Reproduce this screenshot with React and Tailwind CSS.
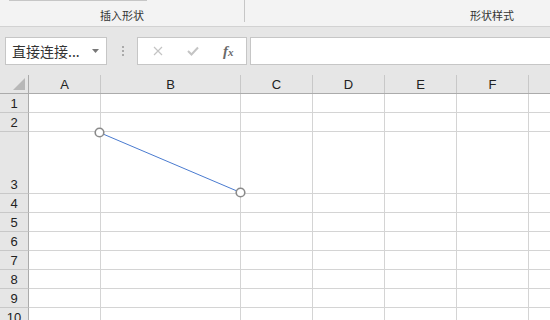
import React from "react";

const cols = [
  { l: "A", w: "w-[72px]" },
  { l: "B", w: "w-[140px]" },
  { l: "C", w: "w-[72px]" },
  { l: "D", w: "w-[72px]" },
  { l: "E", w: "w-[72px]" },
  { l: "F", w: "w-[72px]" },
];

const rows = [
  { n: 1, h: "h-[19px]" },
  { n: 2, h: "h-[19px]" },
  { n: 3, h: "h-[62px]" },
  { n: 4, h: "h-[19px]" },
  { n: 5, h: "h-[19px]" },
  { n: 6, h: "h-[19px]" },
  { n: 7, h: "h-[19px]" },
  { n: 8, h: "h-[19px]" },
  { n: 9, h: "h-[19px]" },
  { n: 10, h: "h-[19px]" },
];

const cjk = { fontFamily: '"Noto Sans CJK SC", "Microsoft YaHei", sans-serif' };
const latin = { fontFamily: '"Liberation Sans", Arial, sans-serif' };

export default function App() {
  return (
    <div className="relative w-[550px] h-[320px] overflow-hidden bg-white">
      {/* Ribbon */}
      <div className="flex h-[27px] bg-[#f3f3f3] border-b border-[#d2d2d2]">
        <div className="relative flex w-[244px] flex-col">
          <div className="ml-[9px] h-px w-[138px] bg-[#c6c6c6]" />
          <div className="flex flex-1 items-center justify-center pt-[3px] text-[11px] text-[#333]" style={cjk}>
            插入形状
          </div>
        </div>
        <div className="mt-0 h-[22px] w-px bg-[#c6c6c6]" />
        <div className="flex flex-1 items-center pl-[225px] pt-[4px] text-[11px] text-[#333]" style={cjk}>
          形状样式
        </div>
      </div>

      {/* Formula bar */}
      <div className="flex h-[48px] items-start bg-[#e6e6e6] pt-[10px]">
        <div className="ml-[5px] flex h-[28px] w-[102px] items-center border border-[#c6c6c6] bg-white pl-[6px]">
          <span className="text-[14px] leading-none text-[#333]" style={cjk}>
            直接连接...
          </span>
          <svg className="ml-auto mr-[7px]" width="7" height="4" viewBox="0 0 7 4">
            <polygon points="0,0 7,0 3.5,4" fill="#777" />
          </svg>
        </div>
        <div className="ml-[15px] mr-[13px] mt-[9px] flex flex-col gap-[2px]">
          <div className="h-[2px] w-[2px] bg-[#aaa]" />
          <div className="h-[2px] w-[2px] bg-[#aaa]" />
          <div className="h-[2px] w-[2px] bg-[#aaa]" />
        </div>
        <div className="flex h-[28px] w-[110px] items-center border border-[#c6c6c6] bg-white">
          <svg className="ml-[15px]" width="10" height="10" viewBox="0 0 10 10">
            <path d="M1 1 L9 9 M9 1 L1 9" stroke="#c4c4c4" strokeWidth="1.2" />
          </svg>
          <svg className="ml-[24px]" width="12" height="10" viewBox="0 0 12 10">
            <path d="M1 5 L4.5 8.5 L11 1.5" stroke="#c4c4c4" strokeWidth="2" fill="none" />
          </svg>
          <span
            className="ml-[24px] text-[15px] font-bold italic leading-none text-[#6a6a6a]"
            style={{ fontFamily: '"Liberation Serif", "Times New Roman", serif' }}
          >
            f<span className="text-[11px]">x</span>
          </span>
        </div>
        <div className="ml-[3px] h-[28px] flex-1 border-y border-l border-[#c6c6c6] bg-white" />
      </div>

      {/* Column header */}
      <div className="flex h-[19px] border-b border-[#ababab] bg-[#e6e6e6]" style={latin}>
        <div className="relative w-[29px] border-r border-[#ababab]">
          <svg className="absolute left-0 top-0" width="28" height="18" viewBox="0 0 28 18">
            <polygon points="25,3 25,15 13,15" fill="#b8b8b8" />
          </svg>
        </div>
        {cols.map((c) => (
          <div
            key={c.l}
            className={`${c.w} flex shrink-0 items-center justify-center border-r border-[#c8c8c8] pt-[1px] text-[13px] text-[#222]`}
          >
            {c.l}
          </div>
        ))}
        <div className="flex-1" />
      </div>

      {/* Grid */}
      <div style={latin}>
        {rows.map((r) => (
          <div key={r.n} className={`flex ${r.h}`}>
            <div className="flex w-[29px] shrink-0 items-end justify-center border-b border-r border-b-[#c8c8c8] border-r-[#ababab] bg-[#e6e6e6] pb-[1px] text-[13px] leading-[15px] text-[#222]">
              {r.n}
            </div>
            {cols.map((c) => (
              <div key={c.l} className={`${c.w} shrink-0 border-b border-r border-[#d4d4d4]`} />
            ))}
            <div className="flex-1 border-b border-[#d4d4d4]" />
          </div>
        ))}
      </div>

      {/* Connector shape */}
      <svg className="pointer-events-none absolute left-0 top-0" width="550" height="320">
        <line x1="99.5" y1="132.5" x2="240.5" y2="192.5" stroke="#4a7bd0" strokeWidth="1" />
        <circle cx="99.5" cy="132.5" r="4.3" fill="white" stroke="#8a8a8a" strokeWidth="1.6" />
        <circle cx="240.5" cy="192.5" r="4.3" fill="white" stroke="#8a8a8a" strokeWidth="1.6" />
      </svg>
    </div>
  );
}
